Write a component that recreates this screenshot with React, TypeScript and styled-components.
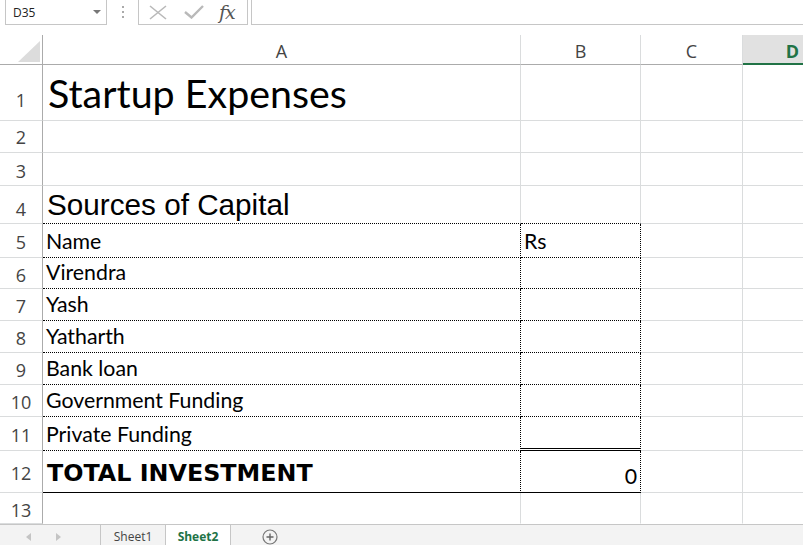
import React from 'react';
import styled, { createGlobalStyle, css } from 'styled-components';

const GlobalStyle = createGlobalStyle`
  html, body { margin: 0; padding: 0; background: #fff; overflow: hidden; }
  body { width: 803px; height: 545px; font-family: "Open Sans", sans-serif; }
`;

type Edge = 'grid' | 'dot' | 'solid' | 'double' | 'none';
type Kind = 'title' | 'section' | 'body' | 'total';

const edge = (e: Edge = 'grid') => {
  switch (e) {
    case 'dot':
      return '1px dotted #000';
    case 'solid':
      return '1px solid #000';
    case 'double':
      return '3px double #000';
    case 'none':
      return '1px solid transparent';
    default:
      return '1px solid #dadcdd';
  }
};

const kinds: Record<Kind, ReturnType<typeof css>> = {
  title: css`
    font-family: Lato, "Open Sans", sans-serif;
    font-size: 39.4px;
    padding-bottom: 4px;
    padding-left: 5px;
  `,
  section: css`
    font-family: "Liberation Sans", Arial, sans-serif;
    font-size: 29.7px;
    padding-bottom: 1px;
    padding-left: 4px;
  `,
  body: css`
    font-family: Lato, "Open Sans", sans-serif;
    font-size: 21.3px;
    padding-bottom: 3px;
    padding-left: 3px;
  `,
  total: css`
    font-family: "DejaVu Sans", sans-serif;
    font-weight: bold;
    font-size: 23.8px;
    padding-bottom: 5px;
    padding-left: 4px;
  `,
};

const Page = styled.div`
  width: 803px;
  height: 545px;
  display: flex;
  flex-direction: column;
  overflow: hidden;
`;

const TopBar = styled.div`
  height: 35px;
  flex: none;
  display: flex;
  align-items: flex-start;
  background: #fff;
`;

const NameBox = styled.div`
  box-sizing: border-box;
  margin: -1px 0 0 5px;
  width: 102px;
  height: 26px;
  border: 1px solid #c6c6c6;
  display: flex;
  align-items: center;
  justify-content: space-between;
  padding: 0 5px 0 7px;
  font: 12px "Open Sans", sans-serif;
  color: #222;
`;

const DropArrow = styled.span`
  width: 0;
  height: 0;
  border-left: 4px solid transparent;
  border-right: 4px solid transparent;
  border-top: 4px solid #777;
`;

const Grip = styled.div`
  width: 31px;
  height: 24px;
  display: flex;
  flex-direction: column;
  align-items: center;
  justify-content: center;
  gap: 3px;
`;

const GripDot = styled.span`
  width: 2px;
  height: 2px;
  background: #aaa;
`;

const FxBox = styled.div`
  box-sizing: border-box;
  margin-top: -1px;
  width: 110px;
  height: 26px;
  border: 1px solid #c6c6c6;
  display: flex;
  align-items: center;
  padding-left: 10px;
`;

const IconSlot = styled.span<{ $gap: number }>`
  display: flex;
  margin-right: ${(p) => p.$gap}px;
`;

const FxLabel = styled.span`
  font-family: "DejaVu Serif", "Liberation Serif", serif;
  font-style: italic;
  font-size: 19px;
  color: #555;
  line-height: 1;
  letter-spacing: -1px;
`;

const FormulaInput = styled.div`
  box-sizing: border-box;
  margin: -1px 0 0 3px;
  flex: 1;
  height: 26px;
  border: 1px solid #c6c6c6;
  border-right: none;
`;

const Sheet = styled.div<{ $rows: number[] }>`
  flex: none;
  width: 843px;
  display: grid;
  grid-template-columns: 43px 478px 120px 102px 100px;
  grid-template-rows: 30px ${(p) => p.$rows.map((h) => `${h}px`).join(' ')};
`;

const Corner = styled.div`
  position: relative;
  box-sizing: border-box;
  border-right: 1px solid #ababab;
  border-bottom: 1px solid #ababab;
  &::after {
    content: '';
    position: absolute;
    right: 2px;
    bottom: 2px;
    width: 0;
    height: 0;
    border-left: 22px solid transparent;
    border-bottom: 21px solid #dcdcdc;
  }
`;

const ColHead = styled.div<{ $active?: boolean }>`
  box-sizing: border-box;
  border-right: 1px solid #dadcdd;
  border-bottom: ${(p) => (p.$active ? '2px solid #217346' : '1px solid #ababab')};
  background: ${(p) => (p.$active ? '#e1e1e1' : '#fff')};
  color: ${(p) => (p.$active ? '#217346' : '#444')};
  font-family: "Open Sans", sans-serif;
  font-weight: ${(p) => (p.$active ? 700 : 400)};
  font-size: 18px;
  display: flex;
  align-items: center;
  justify-content: center;
  padding-top: 3px;
`;

const RowHead = styled.div<{ $shift: number }>`
  box-sizing: border-box;
  border-right: 1px solid #ababab;
  border-bottom: 1px solid #dadcdd;
  color: #444;
  font-family: "Open Sans", sans-serif;
  font-size: 18px;
  display: flex;
  align-items: center;
  justify-content: center;
  padding-top: ${(p) => p.$shift}px;
`;

const Cell = styled.div<{ $bottom?: Edge; $right?: Edge; $kind?: Kind; $align?: 'left' | 'right' }>`
  box-sizing: border-box;
  min-width: 0;
  border-bottom: ${(p) => edge(p.$bottom)};
  border-right: ${(p) => edge(p.$right)};
  display: flex;
  align-items: flex-end;
  justify-content: ${(p) => (p.$align === 'right' ? 'flex-end' : 'flex-start')};
  padding-right: 3px;
  white-space: nowrap;
  color: #000;
  line-height: normal;
  ${(p) => (p.$kind ? kinds[p.$kind] : '')}
`;

const TabBar = styled.div`
  height: 21px;
  flex: none;
  box-sizing: border-box;
  border-top: 1px solid #c6c6c6;
  background: #f3f3f3;
  display: flex;
  align-items: stretch;
`;

const TabNav = styled.div`
  width: 100px;
  display: flex;
  align-items: center;
  padding: 3px 0 0 26px;
  box-sizing: border-box;
  gap: 25px;
`;

const Tab = styled.div<{ $active?: boolean }>`
  box-sizing: border-box;
  width: ${(p) => (p.$active ? 65 : 66)}px;
  border-left: ${(p) => (p.$active ? 'none' : '1px solid #c6c6c6')};
  border-right: 1px solid #c6c6c6;
  background: ${(p) => (p.$active ? '#fff' : 'transparent')};
  color: ${(p) => (p.$active ? '#217346' : '#444')};
  font-family: "Open Sans", sans-serif;
  font-size: 12px;
  font-weight: ${(p) => (p.$active ? 700 : 400)};
  display: flex;
  align-items: center;
  justify-content: center;
  padding-top: 2px;
`;

const AddSheet = styled.div`
  display: flex;
  align-items: center;
  padding: 3px 0 0 31px;
`;

type CellSpec = {
  text?: string;
  kind?: Kind;
  bottom?: Edge;
  right?: Edge;
  align?: 'left' | 'right';
};

type RowSpec = { n: number; h: number; shift?: number; cells: CellSpec[] };

const boxed = (text: string, b: CellSpec = {}): CellSpec[] => [
  { text, kind: 'body', bottom: 'dot', right: 'dot' },
  { bottom: 'dot', right: 'dot', ...b },
];

const rows: RowSpec[] = [
  { n: 1, h: 56, shift: 14, cells: [{ text: 'Startup Expenses', kind: 'title' }] },
  { n: 2, h: 32, shift: -6, cells: [] },
  { n: 3, h: 33, cells: [] },
  {
    n: 4,
    h: 38,
    shift: 8,
    cells: [{ text: 'Sources of Capital', kind: 'section', bottom: 'dot' }, { bottom: 'dot' }],
  },
  { n: 5, h: 34, cells: boxed('Name', { text: 'Rs', kind: 'body' }) },
  { n: 6, h: 31, cells: boxed('Virendra') },
  { n: 7, h: 32, cells: boxed('Yash') },
  { n: 8, h: 32, cells: boxed('Yatharth') },
  { n: 9, h: 32, cells: boxed('Bank loan') },
  { n: 10, h: 32, cells: boxed('Government Funding') },
  { n: 11, h: 34, cells: boxed('Private Funding', { bottom: 'double' }) },
  {
    n: 12,
    h: 42,
    cells: [
      { text: 'TOTAL INVESTMENT', kind: 'total', bottom: 'solid', right: 'dot' },
      { text: '0', kind: 'body', align: 'right', bottom: 'solid', right: 'dot' },
    ],
  },
  { n: 13, h: 31, cells: [{ bottom: 'none' }, { bottom: 'none' }, { bottom: 'none' }, { bottom: 'none' }] },
];

const columns = ['A', 'B', 'C', 'D'];

export default function App() {
  return (
    <Page>
      <GlobalStyle />
      <TopBar>
        <NameBox>
          <span>D35</span>
          <DropArrow />
        </NameBox>
        <Grip>
          <GripDot />
          <GripDot />
          <GripDot />
        </Grip>
        <FxBox>
          <IconSlot $gap={17}>
            <svg width="18" height="15" viewBox="0 0 18 15">
              <path d="M1 1 L17 14 M17 1 L1 14" stroke="#b9b9b9" strokeWidth="1.6" fill="none" />
            </svg>
          </IconSlot>
          <IconSlot $gap={15}>
            <svg width="20" height="14" viewBox="0 0 20 14">
              <path d="M1 7 L7.5 12.5 L19 1" stroke="#b9b9b9" strokeWidth="2.4" fill="none" />
            </svg>
          </IconSlot>
          <FxLabel>fx</FxLabel>
        </FxBox>
        <FormulaInput />
      </TopBar>

      <Sheet $rows={rows.map((r) => r.h)}>
        <Corner />
        {columns.map((c) => (
          <ColHead key={c} $active={c === 'D'}>
            {c}
          </ColHead>
        ))}
        {rows.map((r) => (
          <React.Fragment key={r.n}>
            <RowHead $shift={r.shift ?? 3}>{r.n}</RowHead>
            {columns.map((c, i) => {
              const spec = r.cells[i] || {};
              return (
                <Cell
                  key={c}
                  $kind={spec.kind}
                  $bottom={spec.bottom}
                  $right={spec.right}
                  $align={spec.align}
                >
                  {spec.text}
                </Cell>
              );
            })}
          </React.Fragment>
        ))}
      </Sheet>

      <TabBar>
        <TabNav>
          <svg width="5" height="8" viewBox="0 0 5 8">
            <path d="M5 0 L0 4 L5 8 Z" fill="#c4c4c4" />
          </svg>
          <svg width="5" height="8" viewBox="0 0 5 8">
            <path d="M0 0 L5 4 L0 8 Z" fill="#c4c4c4" />
          </svg>
        </TabNav>
        <Tab>Sheet1</Tab>
        <Tab $active>Sheet2</Tab>
        <AddSheet>
          <svg width="16" height="16" viewBox="0 0 16 16">
            <circle cx="8" cy="8" r="7" stroke="#777" strokeWidth="1.2" fill="none" />
            <path d="M8 4.5 V11.5 M4.5 8 H11.5" stroke="#666" strokeWidth="1.4" />
          </svg>
        </AddSheet>
      </TabBar>
    </Page>
  );
}
